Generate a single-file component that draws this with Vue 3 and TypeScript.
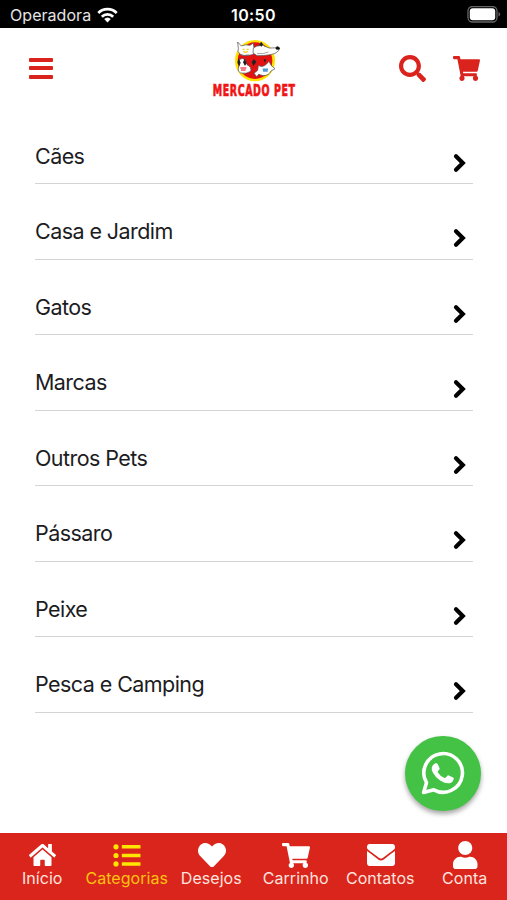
<script setup lang="ts">
interface Glyph {
  box: string
  width: number
  height: number
  path: string
}

interface Tab {
  label: string
  icon: Glyph
  active?: boolean
}

const categories: string[] = [
  'Cães',
  'Casa e Jardim',
  'Gatos',
  'Marcas',
  'Outros Pets',
  'Pássaro',
  'Peixe',
  'Pesca e Camping',
]

const cartPath =
  'M528.12 301.319l47.273-208C578.806 78.301 567.391 64 551.99 64H159.208l-9.166-44.81C147.758 8.021 137.93 0 126.529 0H24C10.745 0 0 10.745 0 24v16c0 13.255 10.745 24 24 24h69.883l70.248 343.435C147.325 417.1 136 435.222 136 456c0 30.928 25.072 56 56 56s56-25.072 56-56c0-15.674-6.447-29.835-16.824-40h209.647C430.447 426.165 424 440.326 424 456c0 30.928 25.072 56 56 56s56-25.072 56-56c0-22.172-12.888-41.332-31.579-50.405l5.517-24.276c3.413-15.018-8.002-29.319-23.403-29.319H218.117l-6.545-32h293.145c11.206 0 20.92-7.754 23.403-18.681z'

const searchPath =
  'M505 442.7L405.3 343c-4.5-4.5-10.6-7-17-7H372c27.6-35.3 44-79.7 44-128C416 93.1 322.9 0 208 0S0 93.1 0 208s93.1 208 208 208c48.3 0 92.7-16.4 128-44v16.3c0 6.4 2.5 12.5 7 17l99.7 99.7c9.4 9.4 24.6 9.4 33.9 0l28.3-28.3c9.4-9.4 9.4-24.6.1-34zM208 336c-70.7 0-128-57.2-128-128 0-70.7 57.2-128 128-128 70.7 0 128 57.2 128 128 0 70.7-57.2 128-128 128z'

const tabs: Tab[] = [
  {
    label: 'Início',
    icon: {
      box: '0 32 576 448',
      width: 27,
      height: 22,
      path: 'M280.37 148.26L96 300.11V464a16 16 0 0 0 16 16l112.06-.29a16 16 0 0 0 15.92-16V368a16 16 0 0 1 16-16h64a16 16 0 0 1 16 16v95.64a16 16 0 0 0 16 16.05L464 480a16 16 0 0 0 16-16V300L295.67 148.26a12.19 12.19 0 0 0-15.3 0zM571.6 251.47L488 182.56V44.05a12 12 0 0 0-12-12h-56a12 12 0 0 0-12 12v72.61L318.47 43a48 48 0 0 0-61 0L4.34 251.47a12 12 0 0 0-1.6 16.9l25.5 31A12 12 0 0 0 45.15 301l235.22-193.74a12.19 12.19 0 0 1 15.3 0L530.9 301a12 12 0 0 0 16.9-1.6l25.5-31a12 12 0 0 0-1.7-16.93z',
    },
  },
  {
    label: 'Categorias',
    active: true,
    icon: {
      box: '0 0 28 23',
      width: 28,
      height: 23,
      path: 'M3 .2a2.6 2.6 0 1 1 0 5.2a2.6 2.6 0 1 1 0-5.2zM3 8.9a2.6 2.6 0 1 1 0 5.2a2.6 2.6 0 1 1 0-5.2zM3 17.3a2.6 2.6 0 1 1 0 5.2a2.6 2.6 0 1 1 0-5.2zM9.3 1H27q.5 0 .5.5V4q0 .5-.5.5H9.3q-.5 0-.5-.5V1.5q0-.5.5-.5zM9.3 9.7H27q.5 0 .5.5v2.5q0 .5-.5.5H9.3q-.5 0-.5-.5v-2.5q0-.5.5-.5zM9.3 18.2H27q.5 0 .5.5v2.5q0 .5-.5.5H9.3q-.5 0-.5-.5v-2.5q0-.5.5-.5z',
    },
  },
  {
    label: 'Desejos',
    icon: {
      box: '0 32 512 448',
      width: 28,
      height: 24.5,
      path: 'M462.3 62.6C407.5 15.9 326 24.3 275.7 76.2L256 96.5l-19.7-20.3C186.1 24.3 104.5 15.9 49.7 62.6c-62.8 53.6-66.1 149.8-9.9 207.9l193.5 199.8c12.5 12.9 32.8 12.9 45.3 0l193.5-199.8c56.3-58.1 53-154.3-9.8-207.9z',
    },
  },
  { label: 'Carrinho', icon: { box: '0 0 576 512', width: 28, height: 25, path: cartPath } },
  {
    label: 'Contatos',
    icon: {
      box: '0 64 512 384',
      width: 28,
      height: 22,
      path: 'M502.3 190.8c3.9-3.1 9.7-.2 9.7 4.7V400c0 26.5-21.5 48-48 48H48c-26.5 0-48-21.5-48-48V195.6c0-5 5.7-7.8 9.7-4.7 22.4 17.4 52.1 39.5 154.1 113.6 21.1 15.4 56.7 47.8 92.2 47.6 35.7.3 72-32.8 92.3-47.6 102-74.1 131.6-96.3 154-113.7zM256 320c23.2.4 56.6-29.2 73.4-41.4 132.7-96.3 142.8-104.7 173.4-128.7 5.8-4.5 9.2-11.5 9.2-18.9v-19c0-26.5-21.5-48-48-48H48c-26.5 0-48 21.5-48 48v19c0 7.4 3.4 14.3 9.2 18.9 30.6 23.9 40.7 32.4 173.4 128.7 16.8 12.2 50.2 41.8 73.4 41.4z',
    },
  },
  {
    label: 'Conta',
    icon: {
      box: '0 0 448 512',
      width: 24.5,
      height: 28,
      path: 'M224 256c70.7 0 128-57.3 128-128S294.7 0 224 0 96 57.3 96 128s57.3 128 128 128zm89.6 32h-16.7c-22.2 10.2-46.9 16-72.9 16s-50.6-5.8-72.9-16h-16.7C60.2 288 0 348.2 0 422.4V464c0 26.5 21.5 48 48 48h352c26.5 0 48-21.5 48-48v-41.6c0-74.2-60.2-134.4-134.4-134.4z',
    },
  },
]
</script>

<template>
  <div class="screen">
    <div class="status">
      <div class="carrier">
        <span>Operadora</span>
        <svg class="wifi" width="21" height="16" viewBox="0 0 21 16">
          <g fill="none" stroke="#fff" stroke-width="2.8">
            <path d="M1.3 5.9a13.2 13.2 0 0 1 18.4 0" />
            <path d="M4.8 9.7a8.2 8.2 0 0 1 11.4 0" />
          </g>
          <path d="M10.5 15.5L7.2 12.1a4.8 4.8 0 0 1 6.6 0z" fill="#fff" />
        </svg>
      </div>
      <span class="clock">10:50</span>
      <svg class="battery" width="34" height="18" viewBox="0 0 34 18">
        <rect x="1" y="0.5" width="29" height="15.5" rx="4.5" fill="none" stroke="#666" stroke-width="1.3" />
        <rect x="2.8" y="2.3" width="25.4" height="11.9" rx="3" fill="#fff" />
        <path d="M31.5 6q1.6 .6 1.6 2.3t-1.6 2.3z" fill="#666" />
      </svg>
    </div>

    <header class="header">
      <button class="icon-button menu" aria-label="Menu">
        <i></i><i></i><i></i>
      </button>
      <div class="brand">
        <svg class="logo" width="52" height="43" viewBox="84 18 156 129">
          <ellipse cx="153" cy="83" rx="60" ry="62" fill="#ffe100" />
          <ellipse cx="153" cy="83" rx="52" ry="55" fill="#e21212" />
          <g fill="#fff" stroke="#444" stroke-width="2" stroke-linejoin="round">
            <path d="M103 47L101 27l11 12q13-6 26-2l10-7 2 16q8 17-10 20-24 5-33-4-8-6-4-15z" />
            <path d="M148 46q8-9 20-8l4-10 8 11 16 6q17 2 26-5 8 5 2 13-10 11-25 12-22 4-40 3l-12-8z" />
            <path d="M106 80q10-8 18 1l5 14q15 7 11 20-12 9-30 5-10-4-7-14 4-10 3-26z" />
            <path d="M163 97q12 8 24-3l8-9 7 13 11 9-12 7q-6 14-24 14l-13-4-6 7-8-10 11-9z" />
          </g>
          <path d="M104 76l6 13-4 11-6-11zM122 77l6 13-5 9-6-11zM150 78l7 9-9 12-5-12zM179 78l8 2-5 9zM166 35l5-8 7 8-6 6z" fill="#222" />
          <path d="M106 64q14 6 28 1M159 62q20 2 34-5" fill="none" stroke="#777" stroke-width="2" />
          <ellipse cx="221" cy="46" rx="6" ry="4.5" fill="#111" />
          <path d="M116 49h6M128 49h6M118 55q7 6 13 0" fill="none" stroke="#f4d21d" stroke-width="4" />
          <path d="M109 105h18M111 111h14" stroke="#ef5262" stroke-width="4" />
          <path d="M176 109h16M177 114h14" stroke="#4d9ad4" stroke-width="5" />
        </svg>
        <span class="wordmark">MERCADO PET</span>
      </div>
      <div class="actions">
        <button class="icon-button" aria-label="Buscar">
          <svg width="27" height="27" viewBox="0 0 512 512"><path :d="searchPath" /></svg>
        </button>
        <button class="icon-button" aria-label="Carrinho">
          <svg width="27" height="25" viewBox="0 0 576 512" preserveAspectRatio="none"><path :d="cartPath" /></svg>
        </button>
      </div>
    </header>

    <main class="list">
      <a v-for="name in categories" :key="name" class="row">
        <span class="name">{{ name }}</span>
        <svg class="chevron" width="14" height="20" viewBox="0 0 14 20">
          <path d="M3 3.2L9.8 10L3 16.8" />
        </svg>
      </a>
    </main>

    <button class="whatsapp" aria-label="WhatsApp">
      <svg width="44" height="44" viewBox="0 0 44 44">
        <path
          class="bubble"
          d="M2.6 41.5L5.5 31.7A19.3 19.3 0 1 1 12.8 38.8z"
        />
        <path
          d="M14.2 12.3q2-.5 2.7 1.2l1.6 3.4q.4 1-.3 1.8l-1.3 1.500q-.4.600 0 1.300 2.300 3.900 6.700 5.500.7.200 1.200-.4l1.500-1.900q.6-.7 1.500-.3l4.300 2.200q.9.500.7 1.500-.7 3.200-4 4.100-4 .8-9.300-2.500-5.200-3.300-7.700-8.200-3-6.300 2.400-9.200z"
        />
      </svg>
    </button>

    <nav class="tabs">
      <a v-for="tab in tabs" :key="tab.label" class="tab" :class="{ active: tab.active }">
        <span class="tab-icon">
          <svg
            :width="tab.icon.width"
            :height="tab.icon.height"
            :viewBox="tab.icon.box"
            preserveAspectRatio="none"
          >
            <path :d="tab.icon.path" />
          </svg>
        </span>
        <span class="tab-label">{{ tab.label }}</span>
      </a>
    </nav>
  </div>
</template>

<style>
body {
  margin: 0;
  background: #fff;
}
</style>

<style scoped>
.screen {
  position: relative;
  display: flex;
  flex-direction: column;
  width: 507px;
  height: 900px;
  overflow: hidden;
  background: #fff;
  color: #1c1c1e;
  font-family: Inter, 'Liberation Sans', sans-serif;
}

.status {
  display: grid;
  grid-template-columns: 1fr auto 1fr;
  align-items: center;
  box-sizing: border-box;
  height: 28px;
  padding: 2px 8px 0 10px;
  background: #000;
  color: #fff;
}

.carrier {
  display: flex;
  align-items: center;
  gap: 6px;
  font-size: 16px;
  letter-spacing: 0.05px;
  color: #e4e4e4;
}

.clock {
  margin-left: -2px;
  font-size: 16px;
  font-weight: 600;
  letter-spacing: 0.4px;
}

.battery {
  justify-self: end;
  margin-right: -2px;
}

.header {
  display: grid;
  grid-template-columns: 1fr 100px 1fr;
  align-items: center;
  box-sizing: border-box;
  height: 80.5px;
  padding: 0 27px 0 29px;
}

.icon-button {
  display: flex;
  padding: 0;
  border: 0;
  background: none;
  fill: #d9231c;
}

.menu {
  flex-direction: column;
  gap: 4.5px;
  width: 24px;
}

.menu i {
  height: 4px;
  border-radius: 1px;
  background: #d9231c;
}

.brand {
  display: flex;
  flex-direction: column;
  align-items: center;
  height: 58px;
}

.logo {
  flex: none;
  margin-left: 7px;
}

.wordmark {
  color: #f01414;
  font-family: 'DejaVu Sans Condensed', 'DejaVu Sans', sans-serif;
  font-size: 16px;
  font-weight: 700;
  line-height: 17px;
  letter-spacing: 0.9px;
  white-space: nowrap;
  -webkit-text-stroke: 0.7px #f01414;
  transform: scaleX(0.655);
}

.actions {
  display: flex;
  align-items: center;
  justify-content: flex-end;
  gap: 27px;
}

.list {
  flex: 1;
  padding: 0 34px 0 34.5px;
}

.row {
  display: flex;
  justify-content: space-between;
  box-sizing: border-box;
  height: 75.5px;
  padding: 33px 6px 0 0.5px;
  border-bottom: 1.5px solid #d4d4d4;
}

.name {
  font-size: 21.5px;
  line-height: 28px;
  letter-spacing: -0.57px;
}

.chevron {
  margin-top: 11px;
  fill: none;
  stroke: #000;
  stroke-width: 4.2px;
  stroke-linecap: round;
  stroke-linejoin: miter;
}

.whatsapp {
  position: absolute;
  right: 26.5px;
  bottom: 89px;
  display: flex;
  align-items: center;
  justify-content: center;
  width: 75.5px;
  height: 75.5px;
  padding: 0;
  border: 0;
  border-radius: 50%;
  background: #43c245;
  box-shadow: 0 3px 5px rgba(0, 0, 0, 0.36);
  fill: #fff;
}

.bubble {
  fill: none;
  stroke: #fff;
  stroke-width: 3.6px;
  stroke-linejoin: round;
}

.tabs {
  display: grid;
  grid-template-columns: repeat(6, 1fr);
  height: 67px;
  background: #da251c;
}

.tab {
  display: flex;
  flex-direction: column;
  align-items: center;
  color: #ffe4df;
  fill: #fff;
}

.tab-icon {
  display: flex;
  align-items: center;
  height: 30px;
  margin-top: 7px;
  padding-left: 1px;
}

.tab-label {
  margin-top: -1px;
  font-size: 16px;
  line-height: 19px;
  letter-spacing: 0.05px;
  white-space: nowrap;
}

.active {
  color: #ffc20e;
  fill: #ffe600;
}
</style>
